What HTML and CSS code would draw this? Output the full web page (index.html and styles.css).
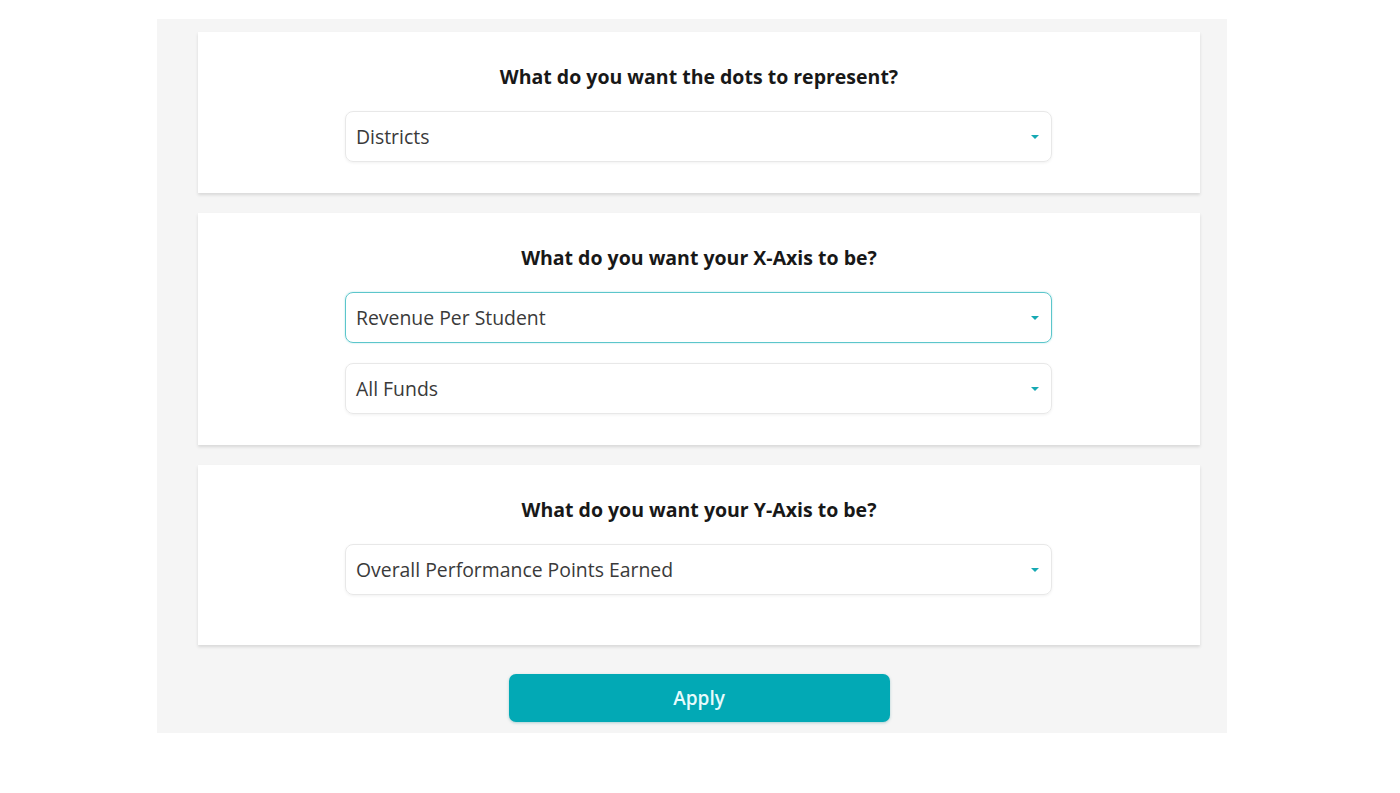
FILE: index.html
```html
<!DOCTYPE html>
<html lang="en">
	<head>
		<meta charset="utf-8">
		<link rel="stylesheet" href="styles.css">
	</head>
	<body>
		<div class="panel">
			<div class="card">
				<h2 class="question">What do you want the dots to represent?</h2>
				<div class="select">
					<span>Districts</span>
					<i class="caret"></i>
				</div>
			</div>
			<div class="card">
				<h2 class="question">What do you want your X-Axis to be?</h2>
				<div class="select focused">
					<span>Revenue Per Student</span>
					<i class="caret"></i>
				</div>
				<div class="select">
					<span>All Funds</span>
					<i class="caret"></i>
				</div>
			</div>
			<div class="card last">
				<h2 class="question">What do you want your Y-Axis to be?</h2>
				<div class="select">
					<span>Overall Performance Points Earned</span>
					<i class="caret"></i>
				</div>
			</div>
			<button class="apply">Apply</button>
		</div>
	</body>
</html>
```

FILE: styles.css
```css
*, *::before, *::after {
	margin: 0;
	padding: 0;
	box-sizing: border-box;
}
body {
	background-color: #fff;
	font-family: "Open Sans", "Noto Sans", sans-serif;
	padding-top: 19px;
}
.panel {
	width: 1070px;
	margin-left: 157px;
	background-color: #f5f5f5;
	padding: 13px 27px 11px 41px;
	display: flex;
	flex-direction: column;
	align-items: center;
}
.card {
	width: 1002px;
	background-color: #fff;
	box-shadow: 0 2px 3px rgba(0,0,0,.12);
	padding: 33px 0 31px;
	margin-bottom: 20px;
	display: flex;
	flex-direction: column;
	align-items: center;
}
.card.last {
	padding-bottom: 50px;
	margin-bottom: 29px;
}
.question {
	font-size: 19.5px;
	font-weight: 700;
	line-height: 24px;
	color: #181818;
	margin-bottom: 22px;
}
.select {
	width: 707px;
	height: 51px;
	margin-left: -1px;
	border: 1px solid #e8e8e8;
	border-radius: 8px;
	box-shadow: 0 1px 3px rgba(0,0,0,.06);
	display: flex;
	align-items: center;
	justify-content: space-between;
	padding: 0 12px 0 10px;
	font-size: 19.4px;
	color: #3a3a3a;
}
.select + .select {
	margin-top: 20px;
}
.select.focused {
	border-color: #5cc6cb;
	box-shadow: 0 0 2px rgba(0,168,181,.35);
}
.caret {
	width: 0;
	height: 0;
	border-left: 4px solid transparent;
	border-right: 4px solid transparent;
	border-top: 4px solid #16a9b3;
	margin-top: 1px;
}
.apply {
	width: 381px;
	height: 48px;
	border: none;
	border-radius: 7px;
	background-color: #02a9b5;
	color: #e8fbfc;
	font-family: "Open Sans", "Noto Sans", sans-serif;
	font-size: 19px;
	font-weight: 600;
	box-shadow: 0 1px 3px rgba(0,120,130,.3);
}
```
